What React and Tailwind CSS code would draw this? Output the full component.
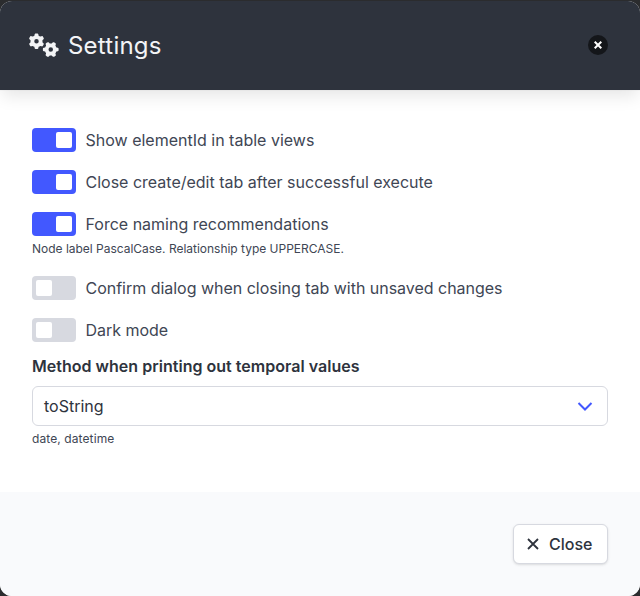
import { FaGears } from 'react-icons/fa6';

function Toggle({ on, label }) {
  return (
    <label className="flex h-6 items-center">
      <span className={on ? 'flex h-6 w-11 justify-end rounded-[4px] bg-[#4258ff] p-1' : 'flex h-6 w-11 rounded-[4px] bg-[#d7d9e0] p-1'}>
        <span className="size-4 rounded-[2px] bg-white" />
      </span>
      <span className="ml-[9.5px] leading-6">{label}</span>
    </label>
  );
}

export default function App() {
  return (
    <div className="h-[596px] w-[640px] bg-[#2b2c2e] pt-px font-['Inter',sans-serif] text-base text-[#404654]">
      <div className="flex h-full max-h-[595px] flex-col overflow-hidden rounded-xl bg-white">
        <header className="flex h-[89px] shrink-0 items-center bg-[#2e333d] pl-[29px] pr-7 text-[#f3f4f6] shadow-[0_8px_16px_-2px_rgba(10,10,10,0.1),0_0_0_1px_rgba(10,10,10,0.02)]">
          <FaGears size={30} className="mb-px" />
          <h1 className="ml-[9px] flex-1 pt-px text-2xl leading-6 tracking-[0.22px]">Settings</h1>
          <button className="mr-1 mb-px flex size-5 items-center justify-center rounded-full bg-[#14161a] text-white">
            <svg width="8" height="8" viewBox="0 0 8 8" fill="none" stroke="currentColor" strokeWidth="2">
              <path d="M0.7 0.7l6.6 6.6M7.3 0.7l-6.6 6.6" />
            </svg>
          </button>
        </header>
        <main className="flex h-[402px] shrink-0 flex-col px-8 pt-[38px]">
          <div className="flex flex-col gap-[18px]">
            <Toggle on label="Show elementId in table views" />
            <Toggle on label="Close create/edit tab after successful execute" />
            <Toggle on label="Force naming recommendations" />
          </div>
          <p className="mt-1 text-xs leading-[18px] tracking-[-0.015px]">Node label PascalCase. Relationship type UPPERCASE.</p>
          <div className="mt-[18px] flex flex-col gap-[18px] tracking-[-0.02px]">
            <Toggle label="Confirm dialog when closing tab with unsaved changes" />
            <Toggle label="Dark mode" />
          </div>
          <p className="mt-3 font-semibold leading-6 tracking-[0.02px] text-[#2e333d]">Method when printing out temporal values</p>
          <div className="mt-2 flex h-10 items-center justify-between rounded-[6px] border border-[#d7d9e0] px-[11px]">
            <span className="text-[#2e333d]">toString</span>
            <svg width="20" height="20" viewBox="0 0 20 20" fill="none" stroke="#4258ff" strokeWidth="2" className="mr-px">
              <path d="M3.5 7l6.5 6.5 6.5-6.5" />
            </svg>
          </div>
          <p className="mt-1 text-xs leading-[18px] tracking-[0.1px]">date, datetime</p>
        </main>
        <footer className="flex flex-1 items-start justify-end bg-[#f9fafc] p-8">
          <button className="flex h-10 w-[95px] items-center rounded-[6px] border border-[#d7d9e0] bg-white pl-[13px] text-[#2e333d] shadow-sm">
            <svg width="12" height="12" viewBox="0 0 12 12" fill="none" stroke="currentColor" strokeWidth="1.8">
              <path d="M1 1l10 10M11 1L1 11" />
            </svg>
            <span className="ml-[10px] font-medium">Close</span>
          </button>
        </footer>
      </div>
    </div>
  );
}
